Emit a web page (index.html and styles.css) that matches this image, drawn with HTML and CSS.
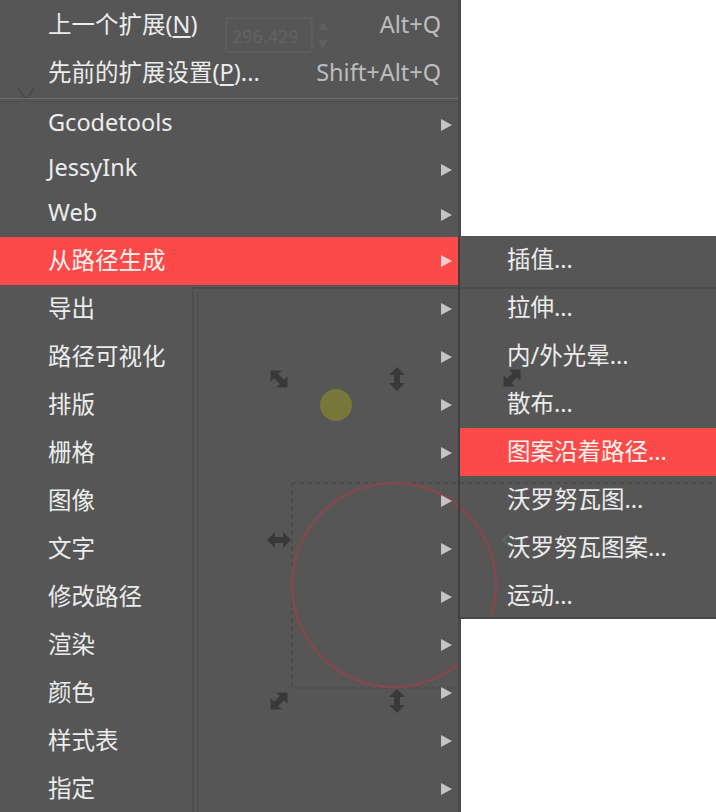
FILE: index.html
```html
<!DOCTYPE html>
<html lang="zh-CN">
<head>
<meta charset="utf-8">
<title>扩展菜单</title>
<link rel="stylesheet" href="styles.css">
</head>
<body>
<div class="screen">
  <div class="menu">
    <div class="item top first"><span class="label">上一个扩展(<u>N</u>)</span><span class="accel">Alt+Q</span></div>
    <div class="item top"><span class="label">先前的扩展设置(<u>P</u>)...</span><span class="accel">Shift+Alt+Q</span></div>
    <div class="sep"></div>
    <div class="item short"><span class="label">Gcodetools</span><svg class="arrow" viewBox="0 0 11 12"><path d="M0 0 L11 6 L0 12 Z"/></svg></div>
    <div class="item short"><span class="label">JessyInk</span><svg class="arrow" viewBox="0 0 11 12"><path d="M0 0 L11 6 L0 12 Z"/></svg></div>
    <div class="item short"><span class="label">Web</span><svg class="arrow" viewBox="0 0 11 12"><path d="M0 0 L11 6 L0 12 Z"/></svg></div>
    <div class="item active"><span class="label">从路径生成</span><svg class="arrow" viewBox="0 0 11 12"><path d="M0 0 L11 6 L0 12 Z"/></svg></div>
    <div class="item"><span class="label">导出</span><svg class="arrow" viewBox="0 0 11 12"><path d="M0 0 L11 6 L0 12 Z"/></svg></div>
    <div class="item"><span class="label">路径可视化</span><svg class="arrow" viewBox="0 0 11 12"><path d="M0 0 L11 6 L0 12 Z"/></svg></div>
    <div class="item"><span class="label">排版</span><svg class="arrow" viewBox="0 0 11 12"><path d="M0 0 L11 6 L0 12 Z"/></svg></div>
    <div class="item"><span class="label">栅格</span><svg class="arrow" viewBox="0 0 11 12"><path d="M0 0 L11 6 L0 12 Z"/></svg></div>
    <div class="item"><span class="label">图像</span><svg class="arrow" viewBox="0 0 11 12"><path d="M0 0 L11 6 L0 12 Z"/></svg></div>
    <div class="item"><span class="label">文字</span><svg class="arrow" viewBox="0 0 11 12"><path d="M0 0 L11 6 L0 12 Z"/></svg></div>
    <div class="item"><span class="label">修改路径</span><svg class="arrow" viewBox="0 0 11 12"><path d="M0 0 L11 6 L0 12 Z"/></svg></div>
    <div class="item"><span class="label">渲染</span><svg class="arrow" viewBox="0 0 11 12"><path d="M0 0 L11 6 L0 12 Z"/></svg></div>
    <div class="item"><span class="label">颜色</span><svg class="arrow" viewBox="0 0 11 12"><path d="M0 0 L11 6 L0 12 Z"/></svg></div>
    <div class="item"><span class="label">样式表</span><svg class="arrow" viewBox="0 0 11 12"><path d="M0 0 L11 6 L0 12 Z"/></svg></div>
    <div class="item"><span class="label">指定</span><svg class="arrow" viewBox="0 0 11 12"><path d="M0 0 L11 6 L0 12 Z"/></svg></div>
  </div>

  <div class="submenu">
    <div class="item sub"><span class="label">插值...</span></div>
    <div class="item sub"><span class="label">拉伸...</span></div>
    <div class="item sub"><span class="label">内/外光晕...</span></div>
    <div class="item sub"><span class="label">散布...</span></div>
    <div class="item sub active"><span class="label">图案沿着路径...</span></div>
    <div class="item sub"><span class="label">沃罗努瓦图...</span></div>
    <div class="item sub"><span class="label">沃罗努瓦图案...</span></div>
    <div class="item sub"><span class="label">运动...</span></div>
  </div>

  <svg class="ghost" viewBox="0 0 716 812" aria-hidden="true">
    <defs>
      <path id="dbl" d="M0 8 L8 0 L8 5 L16 5 L16 0 L24 8 L16 16 L16 11 L8 11 L8 16 Z"/>
      <clipPath id="menus">
        <rect x="0" y="0" width="458" height="812"/>
        <rect x="460" y="236" width="256" height="381"/>
      </clipPath>
    </defs>
    <g clip-path="url(#menus)">
      <!-- toolbar remnants -->
      <rect x="226" y="18" width="86" height="34" rx="3" fill="none" stroke="#606060" stroke-width="1.5"/>
      <text x="232" y="43" class="ghost-text">296.429</text>
      <path d="M318 30 L323 22 L328 30 Z M318 40 L323 48 L328 40 Z" fill="#606060"/>
      <path d="M18 88 L26 100 L34 88" fill="none" stroke="#4c4c4c" stroke-width="2"/>
      <!-- canvas frame -->
      <path d="M193 288 V812 M198 292 V812" stroke="#4c4c4c" stroke-width="1.5"/>
      <path d="M193 288 H716" stroke="#4b4b4b" stroke-width="1.5"/>
      <!-- selection -->
      <path d="M292 483 V688 H716 M292 483 H716" fill="none" stroke="#4a4a4a" stroke-width="1.5" stroke-dasharray="4 4"/>
      <circle cx="394" cy="585" r="102" fill="none" stroke="#7c4a50" stroke-width="3"/>
      <circle cx="336" cy="405" r="16" fill="#77773a"/>
      <path d="M510 534 L503 540 L510 546" fill="none" stroke="#5c6a5c" stroke-width="2"/>
      <g fill="#393939">
        <use href="#dbl" transform="translate(279 379) rotate(45) translate(-12 -8)"/>
        <use href="#dbl" transform="translate(397 379) rotate(90) translate(-12 -8)"/>
        <use href="#dbl" transform="translate(512 378) rotate(-45) translate(-12 -8)"/>
        <use href="#dbl" transform="translate(279 540) translate(-12 -8)"/>
        <use href="#dbl" transform="translate(279 701) rotate(-45) translate(-12 -8)"/>
        <use href="#dbl" transform="translate(397 701) rotate(90) translate(-12 -8)"/>
      </g>
    </g>
  </svg>
</div>
</body>
</html>
```

FILE: styles.css
```css
* { box-sizing: border-box; }

html, body {
  margin: 0;
  padding: 0;
  background: #ffffff;
}

body {
  width: 716px;
  height: 812px;
  overflow: hidden;
  font-family: "Noto Sans", "Noto Sans CJK SC", sans-serif;
}

.screen {
  position: relative;
  display: flex;
  align-items: flex-start;
  width: 716px;
  height: 812px;
}

.menu {
  width: 461px;
  height: 812px;
  flex: none;
  background: #565656;
  border-right: 3px solid #4a4a4a;
  display: flex;
  flex-direction: column;
}

.submenu {
  width: 258px;
  flex: none;
  margin-top: 236px;
  margin-left: -3px;
  height: 383px;
  background: #565656;
  border-left: 2px solid #3f3f3f;
  border-bottom: 2px solid #474747;
  display: flex;
  flex-direction: column;
}

.item {
  position: relative;
  z-index: 2;
  display: flex;
  align-items: center;
  height: 48px;
  flex: none;
  padding: 0 6px 0 48px;
  color: #ececec;
  font-size: 23.5px;
  line-height: 1;
  white-space: nowrap;
}

.item.first { margin-top: 1px; }
.item.short { height: 45px; }
.item.short .label { margin-top: -3px; }

.item.top { padding-right: 17px; }

.item.sub {
  padding-left: 47px;
}

.item.active {
  background: #fc4a4a;
  color: #fff2ec;
}

.item u {
  text-decoration: underline;
  text-underline-offset: 3px;
  text-decoration-thickness: 1.5px;
}

.accel {
  margin-left: auto;
  color: #bdbdbd;
}

.arrow {
  margin-left: auto;
  width: 11px;
  height: 12px;
  fill: #c4c4c4;
}

.item.active .arrow { fill: #f2d0d0; }

.sep {
  position: relative;
  z-index: 2;
  height: 4px;
  flex: none;
  border-top: 1px solid #6c6c6c;
  border-bottom: 1px solid #4c4c4c;
  margin-top: 1px;
}

.ghost {
  position: absolute;
  left: 0;
  top: 0;
  width: 716px;
  height: 812px;
  z-index: 1;
  pointer-events: none;
}

.ghost-text {
  font-family: "Noto Sans", sans-serif;
  font-size: 18px;
  fill: #626262;
}
```
